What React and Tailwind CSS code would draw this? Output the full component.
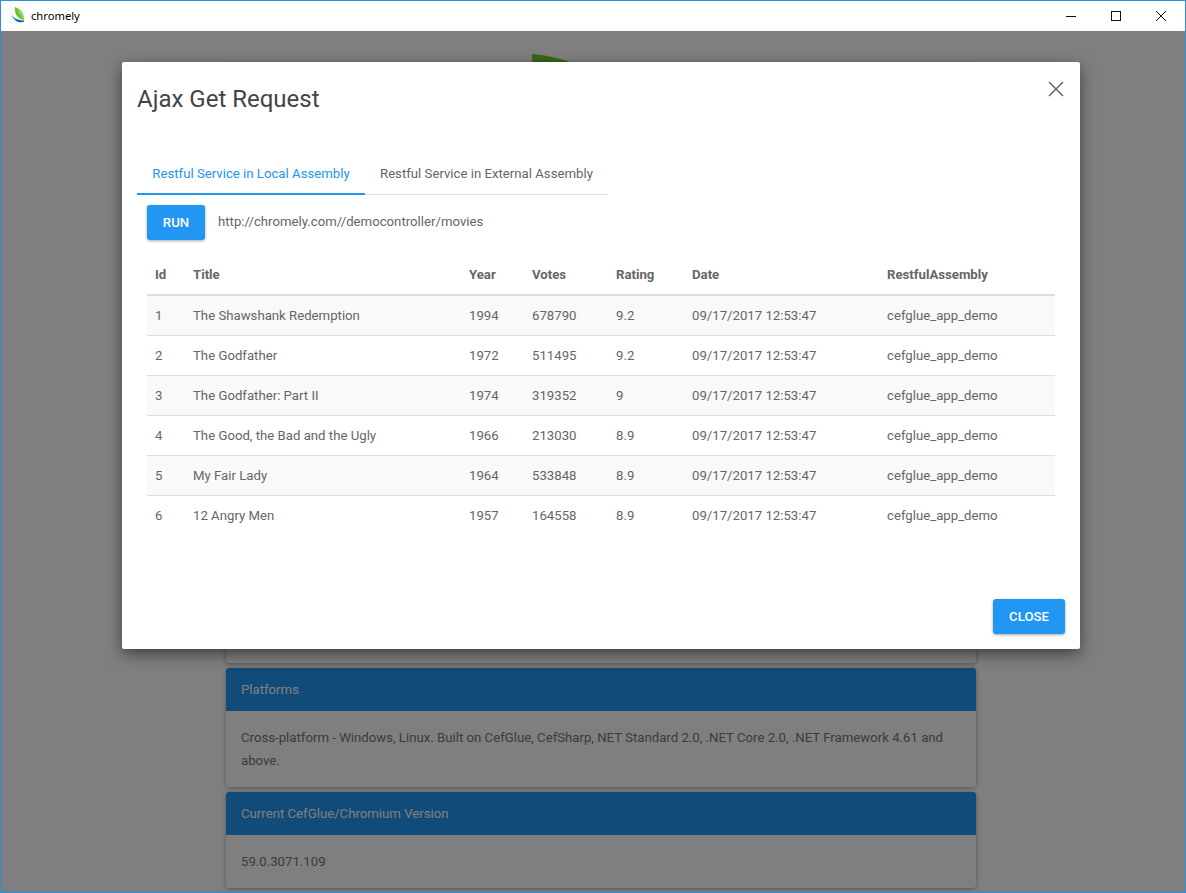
const rows = [
  ["1", "The Shawshank Redemption", "1994", "678790", "9.2"],
  ["2", "The Godfather", "1972", "511495", "9.2"],
  ["3", "The Godfather: Part II", "1974", "319352", "9"],
  ["4", "The Good, the Bad and the Ugly", "1966", "213030", "8.9"],
  ["5", "My Fair Lady", "1964", "533848", "8.9"],
  ["6", "12 Angry Men", "1957", "164558", "8.9"],
];
const heads = ["Id", "Title", "Year", "Votes", "Rating", "Date", "RestfulAssembly"];

function Card({ title, children }) {
  return (
    <div className="w-[750px] mt-[5px] rounded-[3px] bg-white shadow-[0_1px_4px_rgba(0,0,0,0.35)] overflow-hidden">
      <div className="h-[43px] bg-[#2196f3] px-[15px] flex items-center text-white text-[13.2px]">{title}</div>
      <div className="px-[15px] pt-[15px] pb-[15px] text-[13.2px] leading-[23px] text-[#777]">{children}</div>
    </div>
  );
}

export default function App() {
  return (
    <div className="w-[1186px] h-[893px] flex flex-col border border-[#2b8fdc] bg-white overflow-hidden font-['Roboto',sans-serif]">
      <header className="h-[30px] shrink-0 flex items-center bg-white relative">
        <svg width="16" height="16" viewBox="0 0 16 16" className="ml-[8px] mb-[2px] bg-[#f5f8f5]">
          <path d="M6 0 C12 2 15 7 15 13 C9 12 5 7 6 0Z" fill="#6cbf35" />
          <path d="M8 2 C12 4 14 8 15 13 C12 9 10 6 8 2Z" fill="#a5dc6a" />
          <path d="M3 8 C5 11 8 13 15 13.5 L15 14.5 C9 16 4 13 3 8Z" fill="#2a86d0" />
          <path d="M6 12.5 C9 14 12 14 15 14 L15 14.6 C11 15.8 8 15 6 12.5Z" fill="#17508f" />
        </svg>
        <span className="ml-[6px] text-[11.2px] text-black font-['Noto_Sans',sans-serif]">chromely</span>
        <div className="ml-auto flex items-center">
          <svg width="10" height="10" viewBox="0 0 10 10" className="mr-[35px]"><path d="M0 5.5H10" stroke="#111" strokeWidth="1" /></svg>
          <svg width="10" height="10" viewBox="0 0 10 10" className="mr-[35px]"><rect x="0.5" y="0.5" width="9" height="9" fill="none" stroke="#111" /></svg>
          <svg width="10" height="10" viewBox="0 0 10 10" className="mr-[19px]"><path d="M0 0L10 10M10 0L0 10" stroke="#111" strokeWidth="1" /></svg>
        </div>
      </header>

      <main className="relative flex-1 overflow-hidden flex flex-col items-center bg-white pl-[16px]">
        <svg width="180" height="40" viewBox="0 0 180 40" className="mt-[23px] shrink-0">
          <path d="M21 0 C34 1 48 4 59 8 L80 40 L20 40 Z" fill="#6ed232" />
        </svg>
        <div className="w-[750px] h-[600px] shrink-0 rounded-[3px] bg-white shadow-[0_1px_4px_rgba(0,0,0,0.35)] mt-[-31px]" />
        <Card title="Platforms">
          Cross-platform - Windows, Linux. Built on CefGlue, CefSharp, NET Standard 2.0, .NET Core 2.0, .NET Framework 4.61 and above.
        </Card>
        <Card title="Current CefGlue/Chromium Version">59.0.3071.109</Card>

        <div className="absolute inset-0 bg-black/50" />

        <section className="absolute left-[121px] top-[31px] w-[958px] h-[587px] bg-white rounded-[2px] shadow-[0_5px_15px_rgba(0,0,0,0.5)] flex flex-col">
          <svg width="16" height="16" viewBox="0 0 16 16" className="absolute right-[16px] top-[19px]">
            <path d="M1 1L15 15M15 1L1 15" stroke="#666" strokeWidth="1.5" />
          </svg>
          <h1 className="ml-[15px] mt-[22px] text-[24px] leading-[30px] text-[#444]">Ajax Get Request</h1>

          <div className="ml-[15px] mt-[40px] w-[471px] flex border-b border-[#ddd] text-[13.2px] h-[41px]">
            <div className="w-[228px] h-[41px] text-center leading-[39px] text-[#2196f3] border-b-2 border-[#2196f3]">Restful Service in Local Assembly</div>
            <div className="pl-[15px] leading-[39px] text-[#666]">Restful Service in External Assembly</div>
          </div>

          <div className="ml-[25px] mt-[10px] flex">
            <button className="w-[58px] h-[35px] rounded-[3px] bg-[#2196f3] text-white text-[13.2px] font-medium shadow-[0_1px_3px_rgba(0,0,0,0.35)]">RUN</button>
            <span className="ml-[13px] mt-[8px] text-[13.2px] leading-[18px] text-[#666]">http://chromely.com//democontroller/movies</span>
          </div>

          <table className="ml-[25px] mt-[14px] w-[908px] table-fixed border-collapse text-[13.2px] text-[#666]">
            <colgroup>
              <col className="w-[38px]" />
              <col className="w-[276px]" />
              <col className="w-[63px]" />
              <col className="w-[84px]" />
              <col className="w-[76px]" />
              <col className="w-[195px]" />
              <col className="w-[176px]" />
            </colgroup>
            <thead>
              <tr className="h-[41px] border-b-2 border-[#ddd]">
                {heads.map((h) => (
                  <th key={h} className="px-[8px] pt-[2px] text-left font-bold">{h}</th>
                ))}
              </tr>
            </thead>
            <tbody>
              {rows.map((r, i) => (
                <tr key={r[0]} className={`h-[40px] border-b border-[#ddd] last:border-b-0 ${i % 2 === 0 ? "bg-[#f9f9f9]" : "bg-white"}`}>
                  {r.map((c, j) => (
                    <td key={j} className="px-[8px] pt-[2px]">{c}</td>
                  ))}
                  <td className="px-[8px] pt-[2px]">09/17/2017 12:53:47</td>
                  <td className="px-[8px] pt-[2px]">cefglue_app_demo</td>
                </tr>
              ))}
            </tbody>
          </table>

          <button className="absolute right-[15px] bottom-[15px] w-[72px] h-[35px] rounded-[3px] bg-[#2196f3] text-white text-[13.2px] font-medium shadow-[0_1px_3px_rgba(0,0,0,0.35)]">CLOSE</button>
        </section>
      </main>
    </div>
  );
}
